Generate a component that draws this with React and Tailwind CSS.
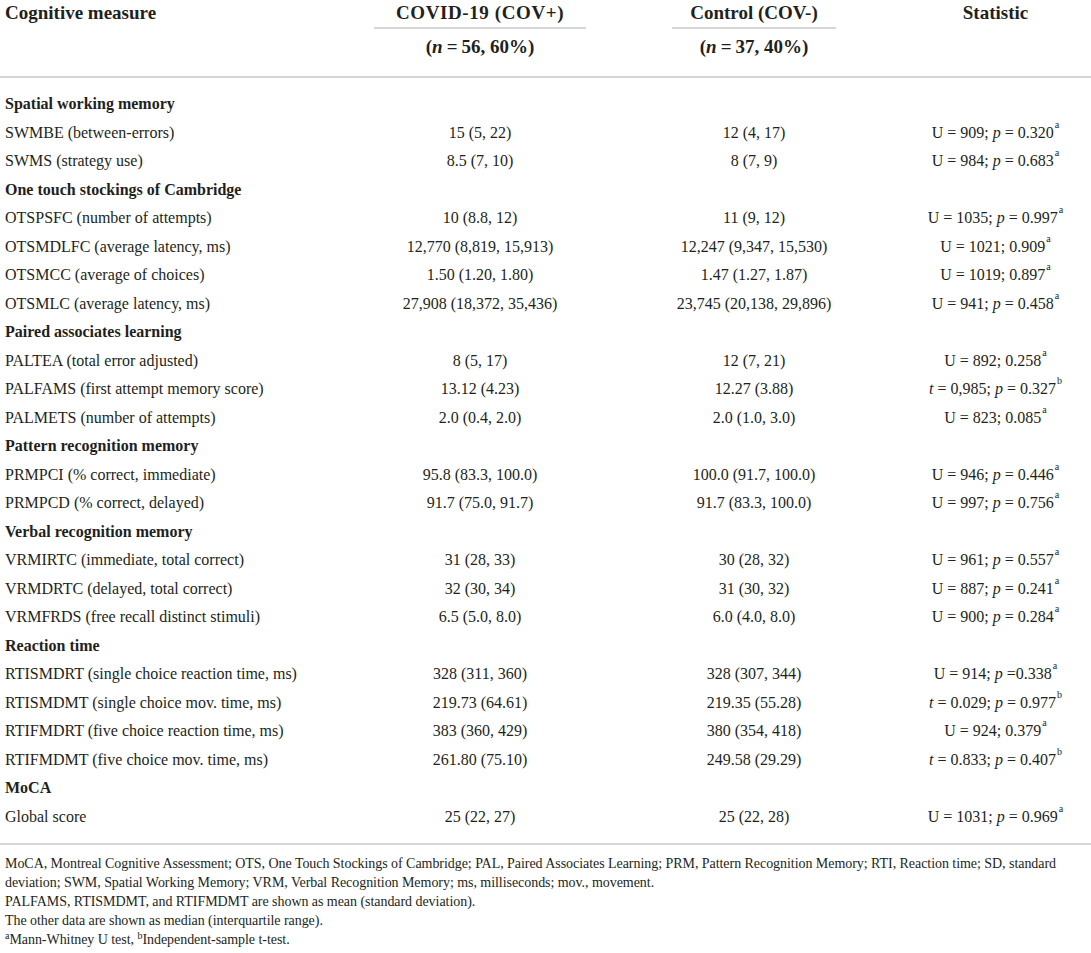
import React from "react";

const sections = [
  {
    title: "Spatial working memory",
    rows: [
      ["SWMBE (between-errors)", "15 (5, 22)", "12 (4, 17)", ["U", "909", true, "0.320", "a"]],
      ["SWMS (strategy use)", "8.5 (7, 10)", "8 (7, 9)", ["U", "984", true, "0.683", "a"]],
    ],
  },
  {
    title: "One touch stockings of Cambridge",
    rows: [
      ["OTSPSFC (number of attempts)", "10 (8.8, 12)", "11 (9, 12)", ["U", "1035", true, "0.997", "a"]],
      ["OTSMDLFC (average latency, ms)", "12,770 (8,819, 15,913)", "12,247 (9,347, 15,530)", ["U", "1021", false, "0.909", "a"]],
      ["OTSMCC (average of choices)", "1.50 (1.20, 1.80)", "1.47 (1.27, 1.87)", ["U", "1019", false, "0.897", "a"]],
      ["OTSMLC (average latency, ms)", "27,908 (18,372, 35,436)", "23,745 (20,138, 29,896)", ["U", "941", true, "0.458", "a"]],
    ],
  },
  {
    title: "Paired associates learning",
    rows: [
      ["PALTEA (total error adjusted)", "8 (5, 17)", "12 (7, 21)", ["U", "892", false, "0.258", "a"]],
      ["PALFAMS (first attempt memory score)", "13.12 (4.23)", "12.27 (3.88)", ["t", "0,985", true, "0.327", "b"]],
      ["PALMETS (number of attempts)", "2.0 (0.4, 2.0)", "2.0 (1.0, 3.0)", ["U", "823", false, "0.085", "a"]],
    ],
  },
  {
    title: "Pattern recognition memory",
    rows: [
      ["PRMPCI (% correct, immediate)", "95.8 (83.3, 100.0)", "100.0 (91.7, 100.0)", ["U", "946", true, "0.446", "a"]],
      ["PRMPCD (% correct, delayed)", "91.7 (75.0, 91.7)", "91.7 (83.3, 100.0)", ["U", "997", true, "0.756", "a"]],
    ],
  },
  {
    title: "Verbal recognition memory",
    rows: [
      ["VRMIRTC (immediate, total correct)", "31 (28, 33)", "30 (28, 32)", ["U", "961", true, "0.557", "a"]],
      ["VRMDRTC (delayed, total correct)", "32 (30, 34)", "31 (30, 32)", ["U", "887", true, "0.241", "a"]],
      ["VRMFRDS (free recall distinct stimuli)", "6.5 (5.0, 8.0)", "6.0 (4.0, 8.0)", ["U", "900", true, "0.284", "a"]],
    ],
  },
  {
    title: "Reaction time",
    rows: [
      ["RTISMDRT (single choice reaction time, ms)", "328 (311, 360)", "328 (307, 344)", ["U", "914", "tight", "0.338", "a"]],
      ["RTISMDMT (single choice mov. time, ms)", "219.73 (64.61)", "219.35 (55.28)", ["t", "0.029", true, "0.977", "b"]],
      ["RTIFMDRT (five choice reaction time, ms)", "383 (360, 429)", "380 (354, 418)", ["U", "924", false, "0.379", "a"]],
      ["RTIFMDMT (five choice mov. time, ms)", "261.80 (75.10)", "249.58 (29.29)", ["t", "0.833", true, "0.407", "b"]],
    ],
  },
  {
    title: "MoCA",
    rows: [["Global score", "25 (22, 27)", "25 (22, 28)", ["U", "1031", true, "0.969", "a"]]],
  },
];

// math-style equals sign with wider spacing
const Eq = ({ right = true }) => (
  <span className={right ? "mx-[4px]" : "ml-[4px]"}>=</span>
);

const Stat = ({ s }) => {
  const [test, value, withP, pValue, note] = s;
  return (
    <span>
      {test === "t" ? <i>t</i> : test}
      <Eq />
      {value};{" "}
      {withP === "tight" ? (
        <>
          <i>p</i>
          <Eq right={false} />
          {pValue}
        </>
      ) : withP ? (
        <>
          <i>p</i>
          <Eq />
          {pValue}
        </>
      ) : (
        pValue
      )}
      <sup className="text-[10px] align-[5px] ml-px">{note}</sup>
    </span>
  );
};

const Row = ({ children }) => (
  <div className="flex items-center h-[28.5px]">{children}</div>
);

export default function App() {
  return (
    <div
      className="w-[1091px] bg-white text-[#231f20] text-[16px] leading-none"
      style={{ fontFamily: '"Liberation Serif", "Times New Roman", serif' }}
    >
      {/* Header */}
      <div className="flex font-bold text-[19px]">
        <div className="w-[374px] pl-[5px] pt-[3px]">Cognitive measure</div>
        <div className="w-[212px] flex flex-col items-center">
          <div className="h-[29px] pt-[3px] w-full text-center tracking-[0.6px] border-b-2 border-[#d6d6d6]">COVID-19 (COV+)</div>
          <div className="pt-[8px]">
            (<i>n</i>
            <Eq />
            56, 60%)
          </div>
        </div>
        <div className="w-[164px] ml-[86px] flex flex-col items-center">
          <div className="h-[29px] pt-[3px] w-full text-center border-b-2 border-[#d6d6d6]">Control (COV-)</div>
          <div className="pt-[8px]">
            (<i>n</i>
            <Eq />
            37, 40%)
          </div>
        </div>
        <div className="w-[191px] ml-[64px] text-center pt-[3px]">Statistic</div>
      </div>
      <div className="mt-[20px] h-[2px] bg-[#d6d6d6]" />

      {/* Body */}
      <div className="pt-[12px] pb-[12px]">
        {sections.map((sec) => (
          <div key={sec.title}>
            <Row>
              <div className="pl-[5px] font-bold">{sec.title}</div>
            </Row>
            {sec.rows.map((r) => (
              <Row key={r[0]}>
                <div className="w-[374px] pl-[5px]">{r[0]}</div>
                <div className="w-[212px] text-center whitespace-nowrap">{r[1]}</div>
                <div className="w-[164px] ml-[86px] text-center whitespace-nowrap">{r[2]}</div>
                <div className="w-[191px] ml-[64px] text-center whitespace-nowrap">
                  <Stat s={r[3]} />
                </div>
              </Row>
            ))}
          </div>
        ))}
      </div>
      <div className="h-[2px] bg-[#d6d6d6]" />

      {/* Footnotes */}
      <div className="pt-[9px] pl-[5px] text-[14px] tracking-[-0.05px] leading-[19px]">
        <p>
          MoCA, Montreal Cognitive Assessment; OTS, One Touch Stockings of Cambridge; PAL, Paired Associates Learning; PRM, Pattern Recognition Memory; RTI, Reaction time; SD, standard deviation; SWM, Spatial Working Memory; VRM, Verbal Recognition Memory; ms, milliseconds; mov., movement.
        </p>
        <p>PALFAMS, RTISMDMT, and RTIFMDMT are shown as mean (standard deviation).</p>
        <p>The other data are shown as median (interquartile range).</p>
        <p>
          <sup className="text-[10px]">a</sup>Mann-Whitney U test, <sup className="text-[10px]">b</sup>Independent-sample t-test.
        </p>
      </div>
    </div>
  );
}
